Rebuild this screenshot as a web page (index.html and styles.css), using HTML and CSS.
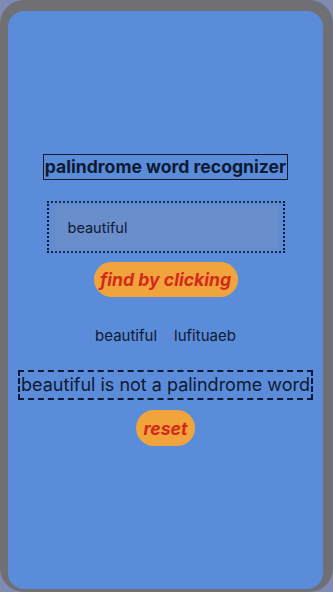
FILE: index.html
```html
<!DOCTYPE html>
<html>
<head>
<meta charset="utf-8">
<link rel="stylesheet" href="styles.css">
</head>
<body>
<div class="frame">
  <div class="screen">
    <div class="title">palindrome word recognizer</div>
    <div class="input-wrap">
      <div class="input">beautiful</div>
    </div>
    <div class="btn find">find by clicking</div>
    <div class="words">
      <span>beautiful</span>
      <span>lufituaeb</span>
    </div>
    <div class="result">beautiful is not a palindrome word</div>
    <div class="btn reset">reset</div>
  </div>
</div>
</body>
</html>
```
FILE: styles.css
```css
html, body {
  margin: 0;
  padding: 0;
  background: #7f8bb3;
}
body {
  width: 333px;
  height: 592px;
  overflow: hidden;
  font-family: Inter, "Noto Sans", sans-serif;
}
.frame {
  box-sizing: border-box;
  width: 333px;
  height: 592px;
  background: #6f6f74;
  border-radius: 24px;
  padding: 11px 10px 3px 8px;
}
.screen {
  box-sizing: border-box;
  height: 100%;
  background: #5b8cd9;
  border-radius: 16px;
  display: flex;
  flex-direction: column;
  align-items: center;
  justify-content: center;
  color: #0d1a33;
}
.title {
  font-weight: 700;
  font-size: 17.6px;
  line-height: 24px;
  border: 1.5px solid #0d1a33;
  padding: 0 1px;
}
.input-wrap {
  margin-top: 21px;
  width: 238px;
  height: 52px;
  box-sizing: border-box;
  border: 2px dotted #0d1a33;
  padding: 3px 6px;
}
.input {
  height: 100%;
  background: #6a8dcb;
  box-shadow: 0 0 4px 2px #6a8dcb;
  display: flex;
  align-items: center;
  padding-left: 13px;
  font-size: 14.5px;
}
.btn {
  background: #f0a43b;
  color: #d42a1e;
  font-weight: 700;
  font-style: italic;
  font-size: 17.6px;
  border-radius: 18px;
  display: flex;
  align-items: center;
  justify-content: center;
}
.find {
  margin-top: 9px;
  width: 144px;
  height: 35px;
}
.words {
  margin-top: 29px;
  display: flex;
  gap: 17px;
  font-size: 15px;
  line-height: 20px;
}
.result {
  margin-top: 24px;
  border: 2px dashed #0d1a33;
  font-size: 18px;
  line-height: 26px;
  padding: 0 1px;
}
.reset {
  margin-top: 10px;
  width: 59px;
  height: 36px;
}
```
